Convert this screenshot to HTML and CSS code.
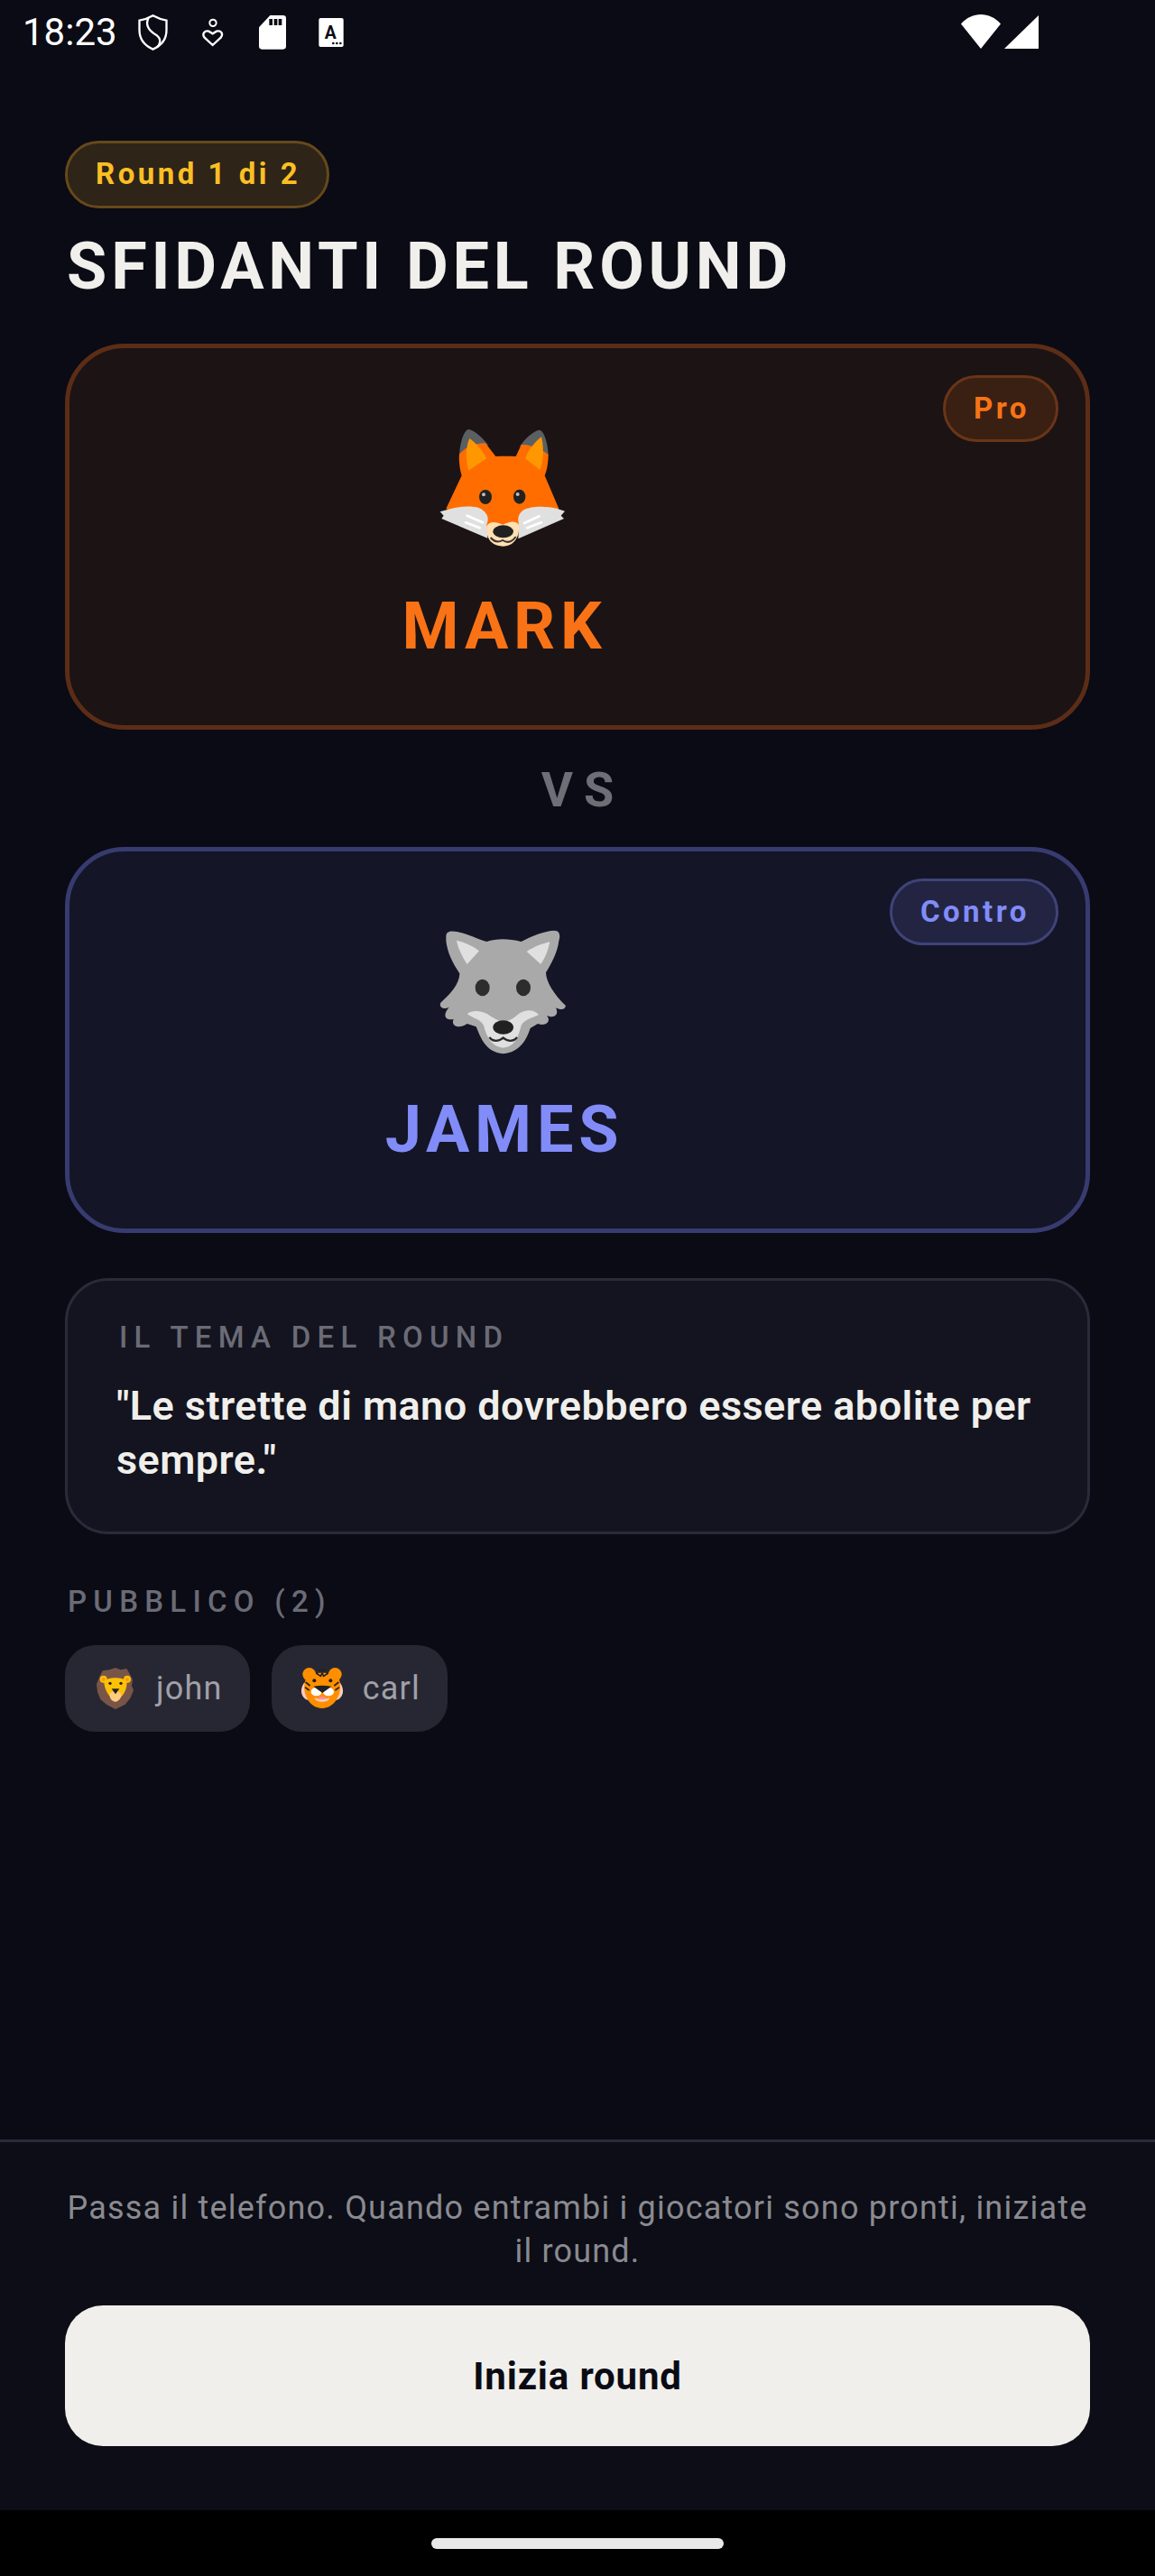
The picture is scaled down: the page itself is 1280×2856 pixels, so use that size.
FILE: index.html
```html
<!DOCTYPE html>
<html lang="it">
<head>
<meta charset="utf-8">
<title>Sfidanti del round</title>
<link rel="stylesheet" href="styles.css">
</head>
<body>
<div class="statusbar">
  <span class="time">18:23</span>
  <svg class="si si-shield" viewBox="458 48 98 120"><path d="M507 52C525 62 540 66 552 68V100C552 130 535 152 507 164C480 152 462 130 462 100V68C475 66 490 62 507 52Z" fill="none" stroke="#fff" stroke-width="7"/><path d="M492 60C478 88 500 105 520 118C536 130 531 148 520 158" fill="none" stroke="#fff" stroke-width="7"/></svg>
  <svg class="si si-heart" viewBox="670 60 72 96"><circle cx="706" cy="76" r="11" fill="none" stroke="#fff" stroke-width="6"/><path d="M705 150L678 125C668 112 680 100 692 104L705 112L718 104C732 100 742 112 732 125Z" fill="none" stroke="#fff" stroke-width="7"/></svg>
  <svg class="si si-sd" viewBox="858 52 90 114"><path d="M895 52L858 92V155Q858 165 868 165H938Q948 165 948 155V62Q948 52 938 52Z" fill="#fff"/><path d="M892 64h11v21h-11zM908 64h11v21h-11zM923 64h11v21h-11z" fill="#0a0b14"/></svg>
  <svg class="si si-a" viewBox="1060 60 82 96"><rect x="1060" y="60" width="82" height="96" rx="6" fill="#fff"/><text x="1099" y="130" class="si-a-letter">A</text><circle cx="1108" cy="144" r="4" fill="#0a0b14"/><circle cx="1120" cy="144" r="4" fill="#0a0b14"/><circle cx="1132" cy="144" r="4" fill="#0a0b14"/></svg>
  <span class="status-right">
    <svg class="si si-wifi" viewBox="0 0 44 38"><path d="M0 10.5C12-3.5 32-3.5 44 10.5L22 38Z" fill="#fff"/></svg>
    <svg class="si si-signal" viewBox="0 0 38 37"><path d="M38 0V37H0Z" fill="#fff"/></svg>
  </span>
</div>

<main class="main">
  <span class="round-badge">Round 1 di 2</span>
  <h1 class="title">SFIDANTI DEL ROUND</h1>

  <section class="card card-pro">
    <span class="side side-pro">Pro</span>
    <svg class="avatar" viewBox="228 60 480 480">
      <path d="M324 195C326 150 340 110 355 108C375 112 400 135 420 160L350 215Z" fill="#5a5f63"/>
      <path d="M620 195C618 150 605 112 590 110C570 114 540 140 525 165Z" fill="#5a5f63"/>
      <path d="M332 262C325 240 322 210 324 190L345 172C355 165 395 150 412 155L445 198C470 197 490 197 512 198L530 160C550 155 600 175 620 192C620 215 617 240 608 262L655 372L470 470L280 372Z" fill="#ff6d00"/>
      <path d="M358 138C375 150 400 175 414 205L355 245C345 215 345 165 358 138Z" fill="#ff9800"/>
      <path d="M597 133C605 165 605 215 592 243L543 205C555 175 575 150 597 133Z" fill="#ff9800"/>
      <ellipse cx="411" cy="333" rx="21" ry="24" fill="#212121"/><circle cx="405" cy="325" r="6" fill="#bdbdbd"/>
      <ellipse cx="524" cy="332" rx="20" ry="24" fill="#212121"/><circle cx="518" cy="324" r="6" fill="#bdbdbd"/>
      <path d="M260 382L285 375C330 362 380 360 400 375C425 395 420 410 415 425L418 470L265 405L272 395Z" fill="#e0e0e0"/>
      <path d="M675 380L650 372C610 362 560 362 535 378C515 395 520 410 522 425L520 472L672 405L662 395Z" fill="#e0e0e0"/>
      <path d="M415 430C412 455 420 495 468 497C515 495 525 455 522 425C510 410 490 415 468 425C445 415 425 412 415 430Z" fill="#ffe0b2"/>
      <ellipse cx="470" cy="448" rx="34" ry="21" fill="#212121"/>
      <path d="M428 468C440 482 452 486 468 477C485 488 500 482 512 465" fill="none" stroke="#3a3330" stroke-width="6"/>
      <path d="M350 395L402 418M345 418L392 436M540 420L590 397M550 436L597 418" stroke="#fff" stroke-width="8" stroke-linecap="round"/>
    </svg>
    <div class="name name-pro">MARK</div>
  </section>

  <div class="vs">VS</div>

  <section class="card card-con">
    <span class="side side-con">Contro</span>
    <svg class="avatar" viewBox="228 54 480 480">
      <path d="M280 115C280 95 300 95 320 100C350 105 390 125 415 132C450 120 490 122 530 132C560 115 610 95 640 95C660 95 660 115 655 130C650 170 630 205 612 235C612 265 640 310 678 345C675 360 660 360 645 352C655 370 645 390 615 378C630 395 615 415 585 405L560 420C550 450 530 500 470 505C410 500 395 450 380 415L350 405C320 425 295 410 305 390C280 395 265 380 290 350C270 360 255 350 262 335C290 310 325 275 325 238C300 200 285 170 280 130Z" fill="#a9a9a9"/>
      <path d="M315 128C345 135 375 150 390 163L350 207C335 185 320 155 315 128Z" fill="#e0e0e0"/>
      <path d="M625 133C620 160 610 185 595 207L548 165C570 150 600 138 625 133Z" fill="#e0e0e0"/>
      <ellipse cx="401" cy="285" rx="24" ry="28" fill="#2d2d2d"/>
      <ellipse cx="537" cy="285" rx="24" ry="28" fill="#2d2d2d"/>
      <path d="M350 372C370 355 410 365 425 378C445 390 460 400 470 395C490 400 505 385 525 370C550 355 575 360 588 375C570 385 540 390 530 410C520 450 510 480 470 485C430 480 415 450 405 410C395 390 365 385 350 372Z" fill="#e0e0e0"/>
      <ellipse cx="470" cy="417" rx="34" ry="23" fill="#212121"/>
      <path d="M424 450C435 465 455 465 470 452C485 465 505 465 516 450" fill="none" stroke="#2a2a2a" stroke-width="7"/>
    </svg>
    <div class="name name-con">JAMES</div>
  </section>

  <section class="topic">
    <div class="label topic-label">IL TEMA DEL ROUND</div>
    <p class="quote">"Le strette di mano dovrebbero essere abolite per sempre."</p>
  </section>

  <div class="label audience-label">PUBBLICO (2)</div>
  <div class="chips">
    <div class="chip">
      <svg class="chip-icon" viewBox="96 87 144 144">
        <path d="M168 90L185 97L205 93L215 110L225 130L222 150L228 165L218 190L200 212L168 228L138 212L118 195L108 170L105 145L115 120L125 100L148 97Z" fill="#795548"/>
        <circle cx="128" cy="128" r="12" fill="#ffc107"/><circle cx="207" cy="128" r="12" fill="#ffc107"/>
        <circle cx="128" cy="129" r="6" fill="#ff9800"/><circle cx="207" cy="129" r="6" fill="#ff9800"/>
        <path d="M130 135C140 120 195 120 205 135C208 160 195 185 170 202C145 190 130 160 130 135Z" fill="#ffc107"/>
        <path d="M150 175L168 165L186 175C190 190 178 203 168 203C155 203 146 190 150 175Z" fill="#ffcc80"/>
        <path d="M155 160H181L168 178Z" fill="#212121"/>
        <circle cx="150" cy="142" r="5" fill="#212121"/><circle cx="186" cy="142" r="5" fill="#212121"/>
      </svg>
      <span class="chip-name">john</span>
    </div>
    <div class="chip">
      <svg class="chip-icon" viewBox="783 87 144 144">
        <path d="M795 140C778 165 785 195 815 200L895 200C925 195 932 165 915 140Z" fill="#ffccbc"/>
        <circle cx="812" cy="112" r="22" fill="#ff8f00"/><circle cx="898" cy="112" r="22" fill="#ff8f00"/>
        <path d="M800 130C800 100 910 100 912 130C925 170 900 225 855 225C810 225 785 170 800 130Z" fill="#ff8f00"/>
        <path d="M835 108L850 118L855 108L860 118L875 108M842 98H868" fill="none" stroke="#212121" stroke-width="5"/>
        <path d="M800 138L815 150M798 155L812 165M910 138L895 150M912 155L898 165" stroke="#212121" stroke-width="5"/>
        <circle cx="829" cy="133" r="6" fill="#212121"/><circle cx="883" cy="133" r="6" fill="#212121"/>
        <path d="M830 190C845 197 865 197 880 190C878 208 832 208 830 190Z" fill="#ffccbc"/>
        <ellipse cx="836" cy="170" rx="18" ry="14" fill="#fff"/><ellipse cx="876" cy="170" rx="18" ry="14" fill="#fff"/>
        <path d="M826 152C845 148 865 148 886 152L856 174Z" fill="#212121"/>
        <path d="M840 190C850 186 862 186 870 190C866 198 846 198 840 190Z" fill="#f48fb1"/>
      </svg>
      <span class="chip-name">carl</span>
    </div>
  </div>
</main>

<footer class="footer">
  <p class="hint">Passa il telefono. Quando entrambi i giocatori sono pronti, iniziate il round.</p>
  <button class="start" type="button">Inizia round</button>
</footer>
<div class="navbar"><span class="handle"></span></div>
</body>
</html>
```
FILE: styles.css
```css
* { box-sizing: border-box; }
html, body { margin: 0; padding: 0; }
body {
  width: 1280px;
  height: 2856px;
  display: flex;
  flex-direction: column;
  background: #0a0b14;
  font-family: Roboto, "Liberation Sans", sans-serif;
  color: #f0efeb;
  overflow: hidden;
}

/* status bar */
.statusbar {
  height: 56px;
  flex: none;
  display: flex;
  align-items: flex-start;
  padding: 16px 129px 0 25px;
}
.time { font-size: 42px; line-height: 40px; color: #fff; width: 128px; }
.si { display: block; flex: none; }
.si-shield { width: 33px; height: 40px; margin-right: 38px; }
.si-heart { width: 24px; height: 32px; margin: 4px 39px 0 0; }
.si-sd { width: 30px; height: 38px; margin: 1px 36px 0 0; }
.si-a { width: 28px; height: 32px; margin-top: 4px; }
.si-a-letter { font-size: 58px; font-weight: 700; fill: #0a0b14; text-anchor: middle; }
.status-right { margin-left: auto; display: flex; gap: 4px; align-items: flex-start; }
.si-wifi { width: 44px; height: 38px; }
.si-signal { width: 38px; height: 37px; margin-top: 1px; }

/* main column */
.main {
  flex: 1;
  display: flex;
  flex-direction: column;
  align-items: stretch;
  padding: 100px 72px 0;
}
.round-badge {
  align-self: flex-start;
  height: 75px;
  display: flex;
  align-items: center;
  padding: 0 29px 2px 31px;
  border: 3px solid #66491a;
  border-radius: 40px;
  background: #2e2418;
  color: #fbbf24;
  font-size: 33px;
  font-weight: 700;
  letter-spacing: 3.5px;
}
.title {
  margin: 23px 0 43px 2px;
  font-size: 72px;
  line-height: 84px;
  font-weight: 700;
  letter-spacing: 4.8px;
  color: #f0efeb;
}

/* contender cards */
.card {
  position: relative;
  height: 428px;
  display: flex;
  flex-direction: column;
  align-items: center;
  padding: 74px 167px 0 0;
  border-radius: 66px;
  border: 5px solid;
}
.card-pro { background: #1c1315; border-color: #5c2d16; }
.card-con { background: #141526; border-color: #373b70; }
.avatar { width: 160px; height: 160px; display: block; flex: none; }
.name {
  margin-top: 33px;
  padding-left: 5px;
  font-size: 72px;
  line-height: 84px;
  font-weight: 700;
  letter-spacing: 5.76px;
}
.name-pro { color: #f97316; }
.name-con { color: #818cf8; }
.side {
  position: absolute;
  top: 30px;
  right: 30px;
  height: 74px;
  display: flex;
  align-items: center;
  padding: 0 29px 2px 31px;
  border: 3px solid;
  border-radius: 40px;
  font-size: 33px;
  font-weight: 700;
  letter-spacing: 3.5px;
}
.side-pro { background: #3a2013; border-color: #6a3517; color: #f97316; }
.side-con { background: #232442; border-color: #3f4379; color: #818cf8; }

.vs {
  height: 130px;
  display: flex;
  align-items: center;
  justify-content: center;
  padding: 2px 0 0 12px;
  font-size: 54px;
  font-weight: 700;
  letter-spacing: 12px;
  color: #6e6e76;
}

/* topic */
.topic {
  margin-top: 50px;
  height: 284px;
  padding: 43px 54px 0;
  background: #13141f;
  border: 3px solid #2a2a3a;
  border-radius: 48px;
}
.label {
  font-size: 33px;
  line-height: 40px;
  font-weight: 500;
  color: #6b6b76;
  letter-spacing: 7.26px;
}
.topic-label { padding-left: 3px; }
.quote {
  margin: 26px 0 0;
  font-size: 45px;
  line-height: 60px;
  font-weight: 600;
  letter-spacing: 0.45px;
  color: #f0efeb;
}
.audience-label { margin-top: 55px; padding-left: 3px; }
.chips { display: flex; gap: 24px; margin-top: 28px; }
.chip {
  height: 96px;
  display: flex;
  align-items: center;
  gap: 21px;
  padding: 0 30px 0 32px;
  background: #272733;
  border-radius: 33px;
}
.chip-icon { width: 48px; height: 48px; display: block; flex: none; }
.chip-name { font-size: 36px; letter-spacing: 1.2px; color: #a0a0a8; }

/* footer */
.footer {
  flex: none;
  height: 411px;
  padding: 49px 72px 0;
  border-top: 3px solid #2a2a3a;
  background: #0c0d16;
}
.hint {
  margin: 0;
  font-size: 36px;
  line-height: 48px;
  letter-spacing: 1.2px;
  text-align: center;
  color: #8a8a90;
}
.start {
  display: block;
  width: 100%;
  height: 156px;
  margin-top: 36px;
  border: 0;
  border-radius: 42px;
  background: #f0efeb;
  font-family: inherit;
  font-size: 42px;
  font-weight: 700;
  letter-spacing: 0.84px;
  color: #0a0b14;
}

/* nav bar */
.navbar {
  flex: none;
  height: 73px;
  background: #000;
  display: flex;
  justify-content: center;
  padding-top: 31px;
}
.handle { width: 324px; height: 12px; border-radius: 6px; background: #e9e9e9; }
```
